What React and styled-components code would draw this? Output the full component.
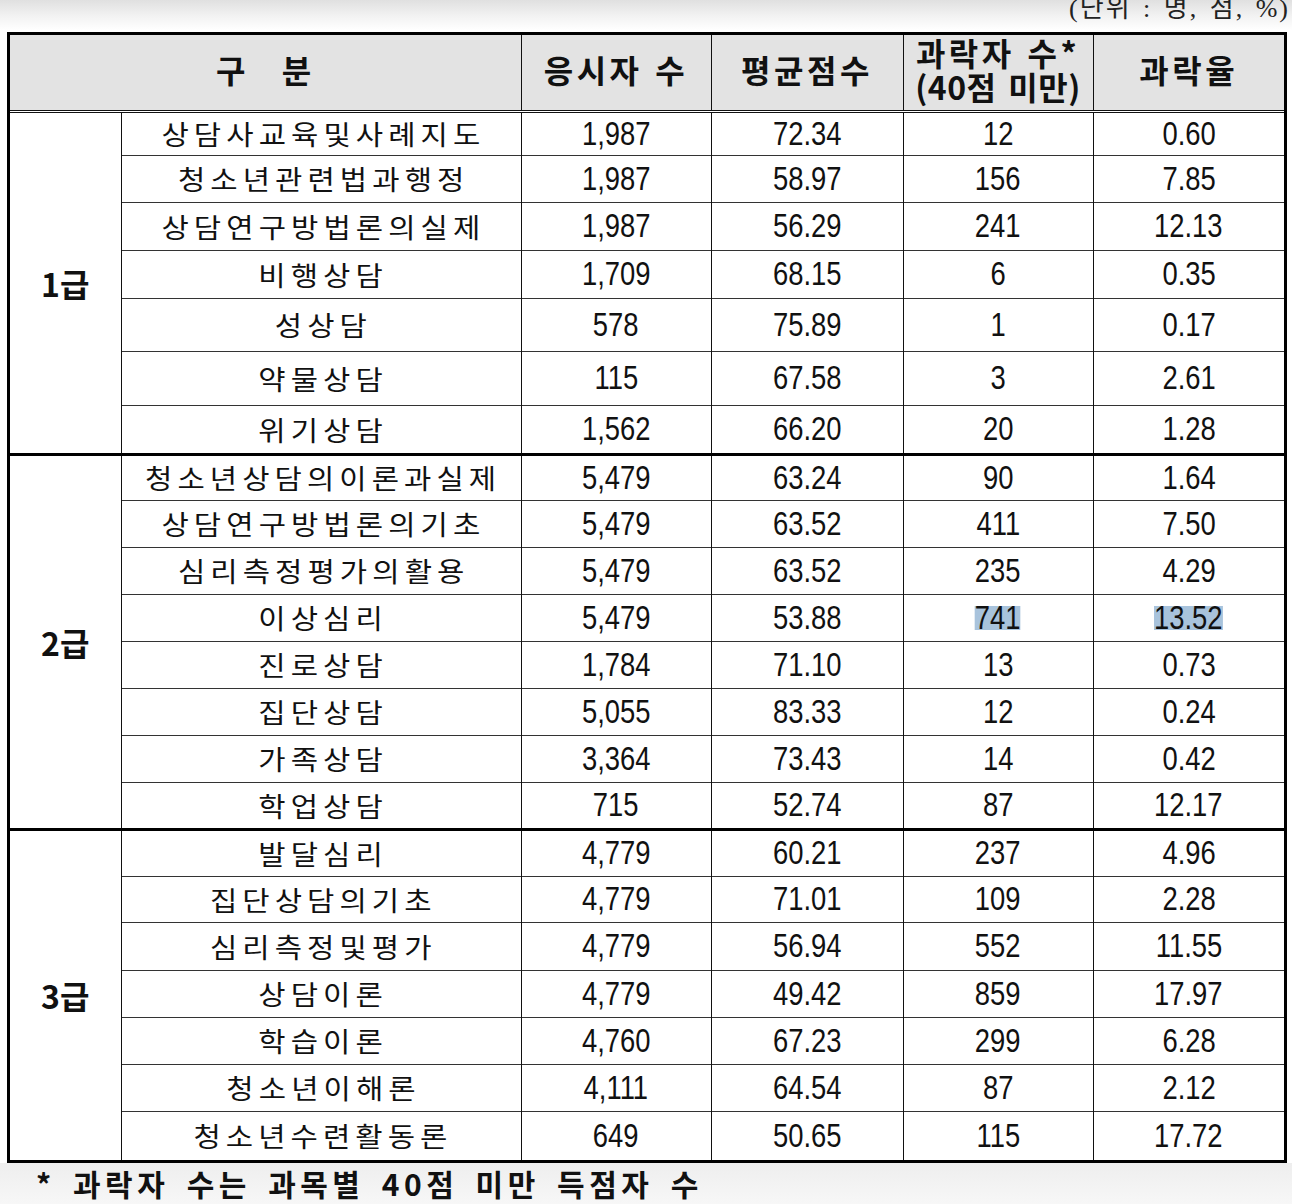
import React from 'react';
import styled, { createGlobalStyle } from 'styled-components';

const GlobalStyle = createGlobalStyle`
  html, body {
    margin: 0;
    padding: 0;
    background: #fff;
  }
  body {
    font-family: "Noto Sans CJK KR", "Liberation Sans", sans-serif;
    color: #111;
  }
`;

const Page = styled.div`
  width: 1292px;
  height: 1204px;
  overflow: hidden;
  display: flex;
  flex-direction: column;
  background: linear-gradient(#e0e0e0 0px, #f2f2f2 16px, #ffffff 30px);
`;

const Unit = styled.div`
  height: 32px;
  display: flex;
  justify-content: flex-end;
  align-items: flex-start;
  overflow: hidden;
  padding-right: 2px;
  font-family: "Liberation Serif", "Noto Sans CJK KR", serif;
  font-size: 26px;
  letter-spacing: 2px;
  word-spacing: 3px;
  line-height: 26px;
  color: #222;
  span {
    margin-top: -4px;
  }
`;

const Frame = styled.div`
  box-sizing: border-box;
  width: 1280px;
  margin-left: 7px;
  border: 3px solid #000;
  background: #fff;
`;

const Table = styled.table`
  width: 1274px;
  border-collapse: collapse;
  border-style: hidden;
  table-layout: fixed;
`;

const HeadRow = styled.tr`
  height: 76px;
  background: #e3e3e3;
`;

const Th = styled.th`
  padding: 0 0 6px;
  border-left: 1px solid #111;
  border-bottom: 3px double #111;
  font-family: "Noto Sans CJK KR", sans-serif;
  font-weight: 700;
  font-size: 32px;
  letter-spacing: 3.5px;
  word-spacing: ${p => p.$wide ? '22px' : '2px'};
  line-height: 34px;
  color: #111;
  text-align: center;
  vertical-align: middle;
`;

const SubLine = styled.span`
  letter-spacing: 0.5px;
  word-spacing: 4px;
`;

const Row = styled.tr`
  height: ${p => p.$h}px;
`;

const Td = styled.td`
  padding: 0;
  border-left: 1px solid #111;
  border-top: ${p => p.$thick ? '3px solid #000' : '1px solid #333'};
  text-align: center;
  vertical-align: middle;
  line-height: 1;
`;

const Grade = styled(Td)`
  font-family: "Noto Sans CJK KR", sans-serif;
  font-weight: 700;
  font-size: 32px;
  color: #111;
`;

const Subject = styled(Td)`
  font-family: "Noto Sans CJK KR", sans-serif;
  font-weight: 400;
  font-size: 27px;
  color: #111;
`;

const SubjectText = styled.span`
  display: inline-block;
  letter-spacing: 4.6px;
  text-indent: 4px;
  transform: scaleX(1.1);
`;

const Num = styled.span`
  display: inline-block;
  font-family: "Liberation Sans", Arial, sans-serif;
  font-size: 33px;
  line-height: 24px;
  transform: scaleX(0.83);
  color: #111;
  background: ${p => p.$mark ? '#a8c3dc' : 'transparent'};
`;

const Footer = styled.div`
  flex: 1;
  padding: 2px 0 0 36px;
  background: linear-gradient(#eeeeee, #f7f7f7);
  font-family: "Noto Sans CJK KR", sans-serif;
  font-weight: 700;
  font-size: 30px;
  letter-spacing: 4.5px;
  word-spacing: 6px;
  line-height: 36px;
  color: #111;
  white-space: nowrap;
`;

const groups = [
  {
    name: '1급',
    rows: [
      ['상담사교육및사례지도', '1,987', '72.34', '12', '0.60', 44],
      ['청소년관련법과행정', '1,987', '58.97', '156', '7.85', 47],
      ['상담연구방법론의실제', '1,987', '56.29', '241', '12.13', 48],
      ['비행상담', '1,709', '68.15', '6', '0.35', 48],
      ['성상담', '578', '75.89', '1', '0.17', 53],
      ['약물상담', '115', '67.58', '3', '2.61', 54],
      ['위기상담', '1,562', '66.20', '20', '1.28', 49],
    ],
  },
  {
    name: '2급',
    rows: [
      ['청소년상담의이론과실제', '5,479', '63.24', '90', '1.64', 46],
      ['상담연구방법론의기초', '5,479', '63.52', '411', '7.50', 47],
      ['심리측정평가의활용', '5,479', '63.52', '235', '4.29', 47],
      ['이상심리', '5,479', '53.88', '741', '13.52', 47, true],
      ['진로상담', '1,784', '71.10', '13', '0.73', 47],
      ['집단상담', '5,055', '83.33', '12', '0.24', 47],
      ['가족상담', '3,364', '73.43', '14', '0.42', 47],
      ['학업상담', '715', '52.74', '87', '12.17', 47],
    ],
  },
  {
    name: '3급',
    rows: [
      ['발달심리', '4,779', '60.21', '237', '4.96', 47],
      ['집단상담의기초', '4,779', '71.01', '109', '2.28', 46],
      ['심리측정및평가', '4,779', '56.94', '552', '11.55', 48],
      ['상담이론', '4,779', '49.42', '859', '17.97', 47],
      ['학습이론', '4,760', '67.23', '299', '6.28', 47],
      ['청소년이해론', '4,111', '64.54', '87', '2.12', 47],
      ['청소년수련활동론', '649', '50.65', '115', '17.72', 49],
    ],
  },
];

const App = () => {
  return (
    <>
      <GlobalStyle />
      <Page>
        <Unit><span>(단위 : 명, 점, %)</span></Unit>
        <Frame>
          <Table>
            <colgroup>
              <col style={{ width: 111 }} />
              <col style={{ width: 400 }} />
              <col style={{ width: 190 }} />
              <col style={{ width: 192 }} />
              <col style={{ width: 190 }} />
              <col style={{ width: 191 }} />
            </colgroup>
            <thead>
              <HeadRow>
                <Th colSpan={2} $wide>구 분</Th>
                <Th>응시자 수</Th>
                <Th>평균점수</Th>
                <Th>과락자 수*<br /><SubLine>(40점 미만)</SubLine></Th>
                <Th>과락율</Th>
              </HeadRow>
            </thead>
            <tbody>
              {groups.map((g, gi) =>
                g.rows.map((r, ri) => {
                  const thick = gi > 0 && ri === 0;
                  return (
                    <Row key={g.name + ri} $h={r[5]}>
                      {ri === 0 && (
                        <Grade rowSpan={g.rows.length} $thick={thick}>{g.name}</Grade>
                      )}
                      <Subject $thick={thick}><SubjectText>{r[0]}</SubjectText></Subject>
                      <Td $thick={thick}><Num>{r[1]}</Num></Td>
                      <Td $thick={thick}><Num>{r[2]}</Num></Td>
                      <Td $thick={thick}><Num $mark={r[6]}>{r[3]}</Num></Td>
                      <Td $thick={thick}><Num $mark={r[6]}>{r[4]}</Num></Td>
                    </Row>
                  );
                })
              )}
            </tbody>
          </Table>
        </Frame>
        <Footer>* 과락자 수는 과목별 40점 미만 득점자 수</Footer>
      </Page>
    </>
  );
};

export default App;
